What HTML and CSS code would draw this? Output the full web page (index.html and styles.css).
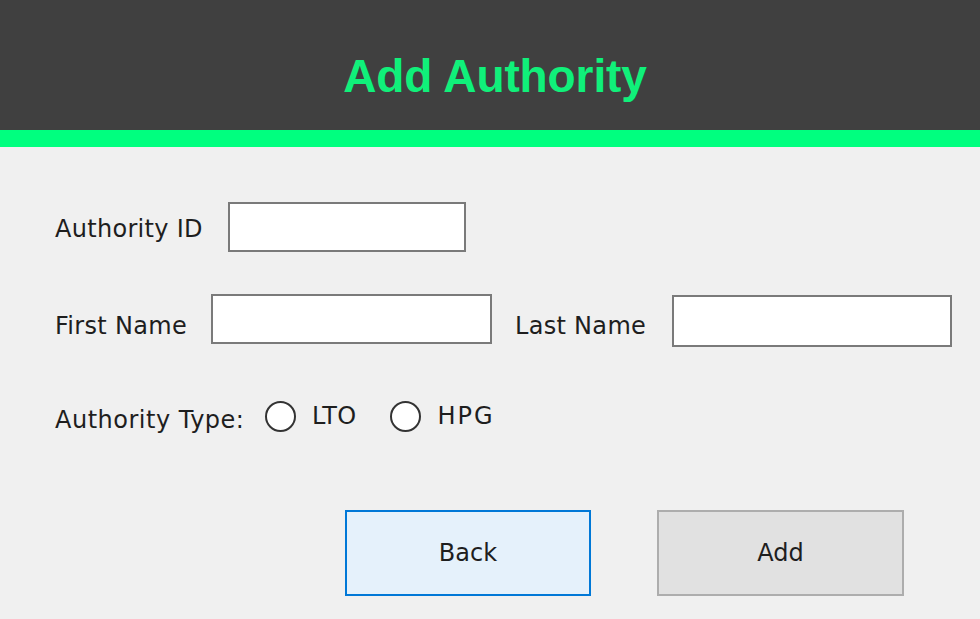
FILE: index.html
```html
<!DOCTYPE html>
<html lang="en">
<head>
<meta charset="utf-8">
<title>Add Authority</title>
<link rel="stylesheet" href="styles.css">
</head>
<body>
<header class="header">
  <h1 class="title">Add Authority</h1>
</header>
<div class="accent"></div>
<main class="form">
  <div class="row row-id">
    <label class="lbl lbl-id" for="aid">Authority ID</label>
    <input class="field field-id" id="aid" type="text">
  </div>
  <div class="row row-name">
    <label class="lbl lbl-first" for="fname">First Name</label>
    <input class="field field-first" id="fname" type="text">
    <label class="lbl lbl-last" for="lname">Last Name</label>
    <input class="field field-last" id="lname" type="text">
  </div>
  <div class="row row-type">
    <span class="lbl lbl-type">Authority Type:</span>
    <label class="radio"><span class="dot"></span><span class="radio-text">LTO</span></label>
    <label class="radio radio-hpg"><span class="dot"></span><span class="radio-text">HPG</span></label>
  </div>
  <div class="row row-buttons">
    <button class="btn btn-back" type="button">Back</button>
    <button class="btn btn-add" type="button">Add</button>
  </div>
</main>
</body>
</html>
```
FILE: styles.css
```css
* { box-sizing: border-box; }
html, body { margin: 0; padding: 0; }
body {
  width: 980px;
  height: 619px;
  overflow: hidden;
  background: #f0f0f0;
  font-family: "DejaVu Sans", "Liberation Sans", sans-serif;
  color: #1e1e1e;
}
.header {
  height: 130px;
  background: #404040;
  display: flex;
  justify-content: center;
  padding-left: 10px;
}
.title {
  margin: 0;
  padding-top: 50px;
  font-family: "Liberation Sans", Arial, sans-serif;
  font-weight: bold;
  font-size: 46px;
  line-height: 52px;
  color: #10f07a;
  letter-spacing: -0.1px;
}
.accent {
  height: 17px;
  background: #00ff7f;
}
.form {
  padding: 55px 0 0 55px;
  display: flex;
  flex-direction: column;
}
.row {
  display: flex;
  align-items: center;
}
.lbl {
  font-size: 24px;
  line-height: 28px;
  white-space: nowrap;
  letter-spacing: 0.3px;
  padding-top: 4px;
}
.field {
  height: 50px;
  border: 2px solid #7a7a7a;
  background: #fff;
  outline: none;
  padding: 0;
  margin: 0;
}
.lbl-id { width: 173px; }
.field-id { width: 238px; }
.row-name {
  margin-top: 42px;
  align-items: flex-start;
}
.row-name .lbl { margin-top: 14px; }
.lbl-first { width: 156px; }
.field-first { width: 281px; }
.lbl-last { margin-left: 23px; width: 157px; }
.field-last { width: 280px; height: 52px; margin-top: 1px; }
.row-type { margin-top: 53px; height: 32px; }
.lbl-type { width: 210px; padding-top: 0; margin-top: 8px; letter-spacing: 0.5px; }
.radio {
  display: flex;
  align-items: center;
  font-size: 24px;
}
.dot {
  width: 31px;
  height: 31px;
  border: 2.5px solid #333;
  border-radius: 50%;
  background: #fff;
}
.radio-text { margin-left: 16px; letter-spacing: 0.3px; }
.radio-hpg { margin-left: 33px; }
.radio-hpg .radio-text { margin-left: 17px; letter-spacing: 2px; }
.row-buttons {
  margin-top: 78px;
  padding-left: 290px;
  gap: 66px;
}
.btn {
  width: 246px;
  height: 86px;
  font-family: "DejaVu Sans", sans-serif;
  font-size: 24px;
  color: #1e1e1e;
  padding: 0;
  margin: 0;
}
.btn-back {
  background: #e5f1fb;
  border: 2px solid #0078d7;
}
.btn-add {
  width: 247px;
  background: #e1e1e1;
  border: 2px solid #adadad;
}
```
